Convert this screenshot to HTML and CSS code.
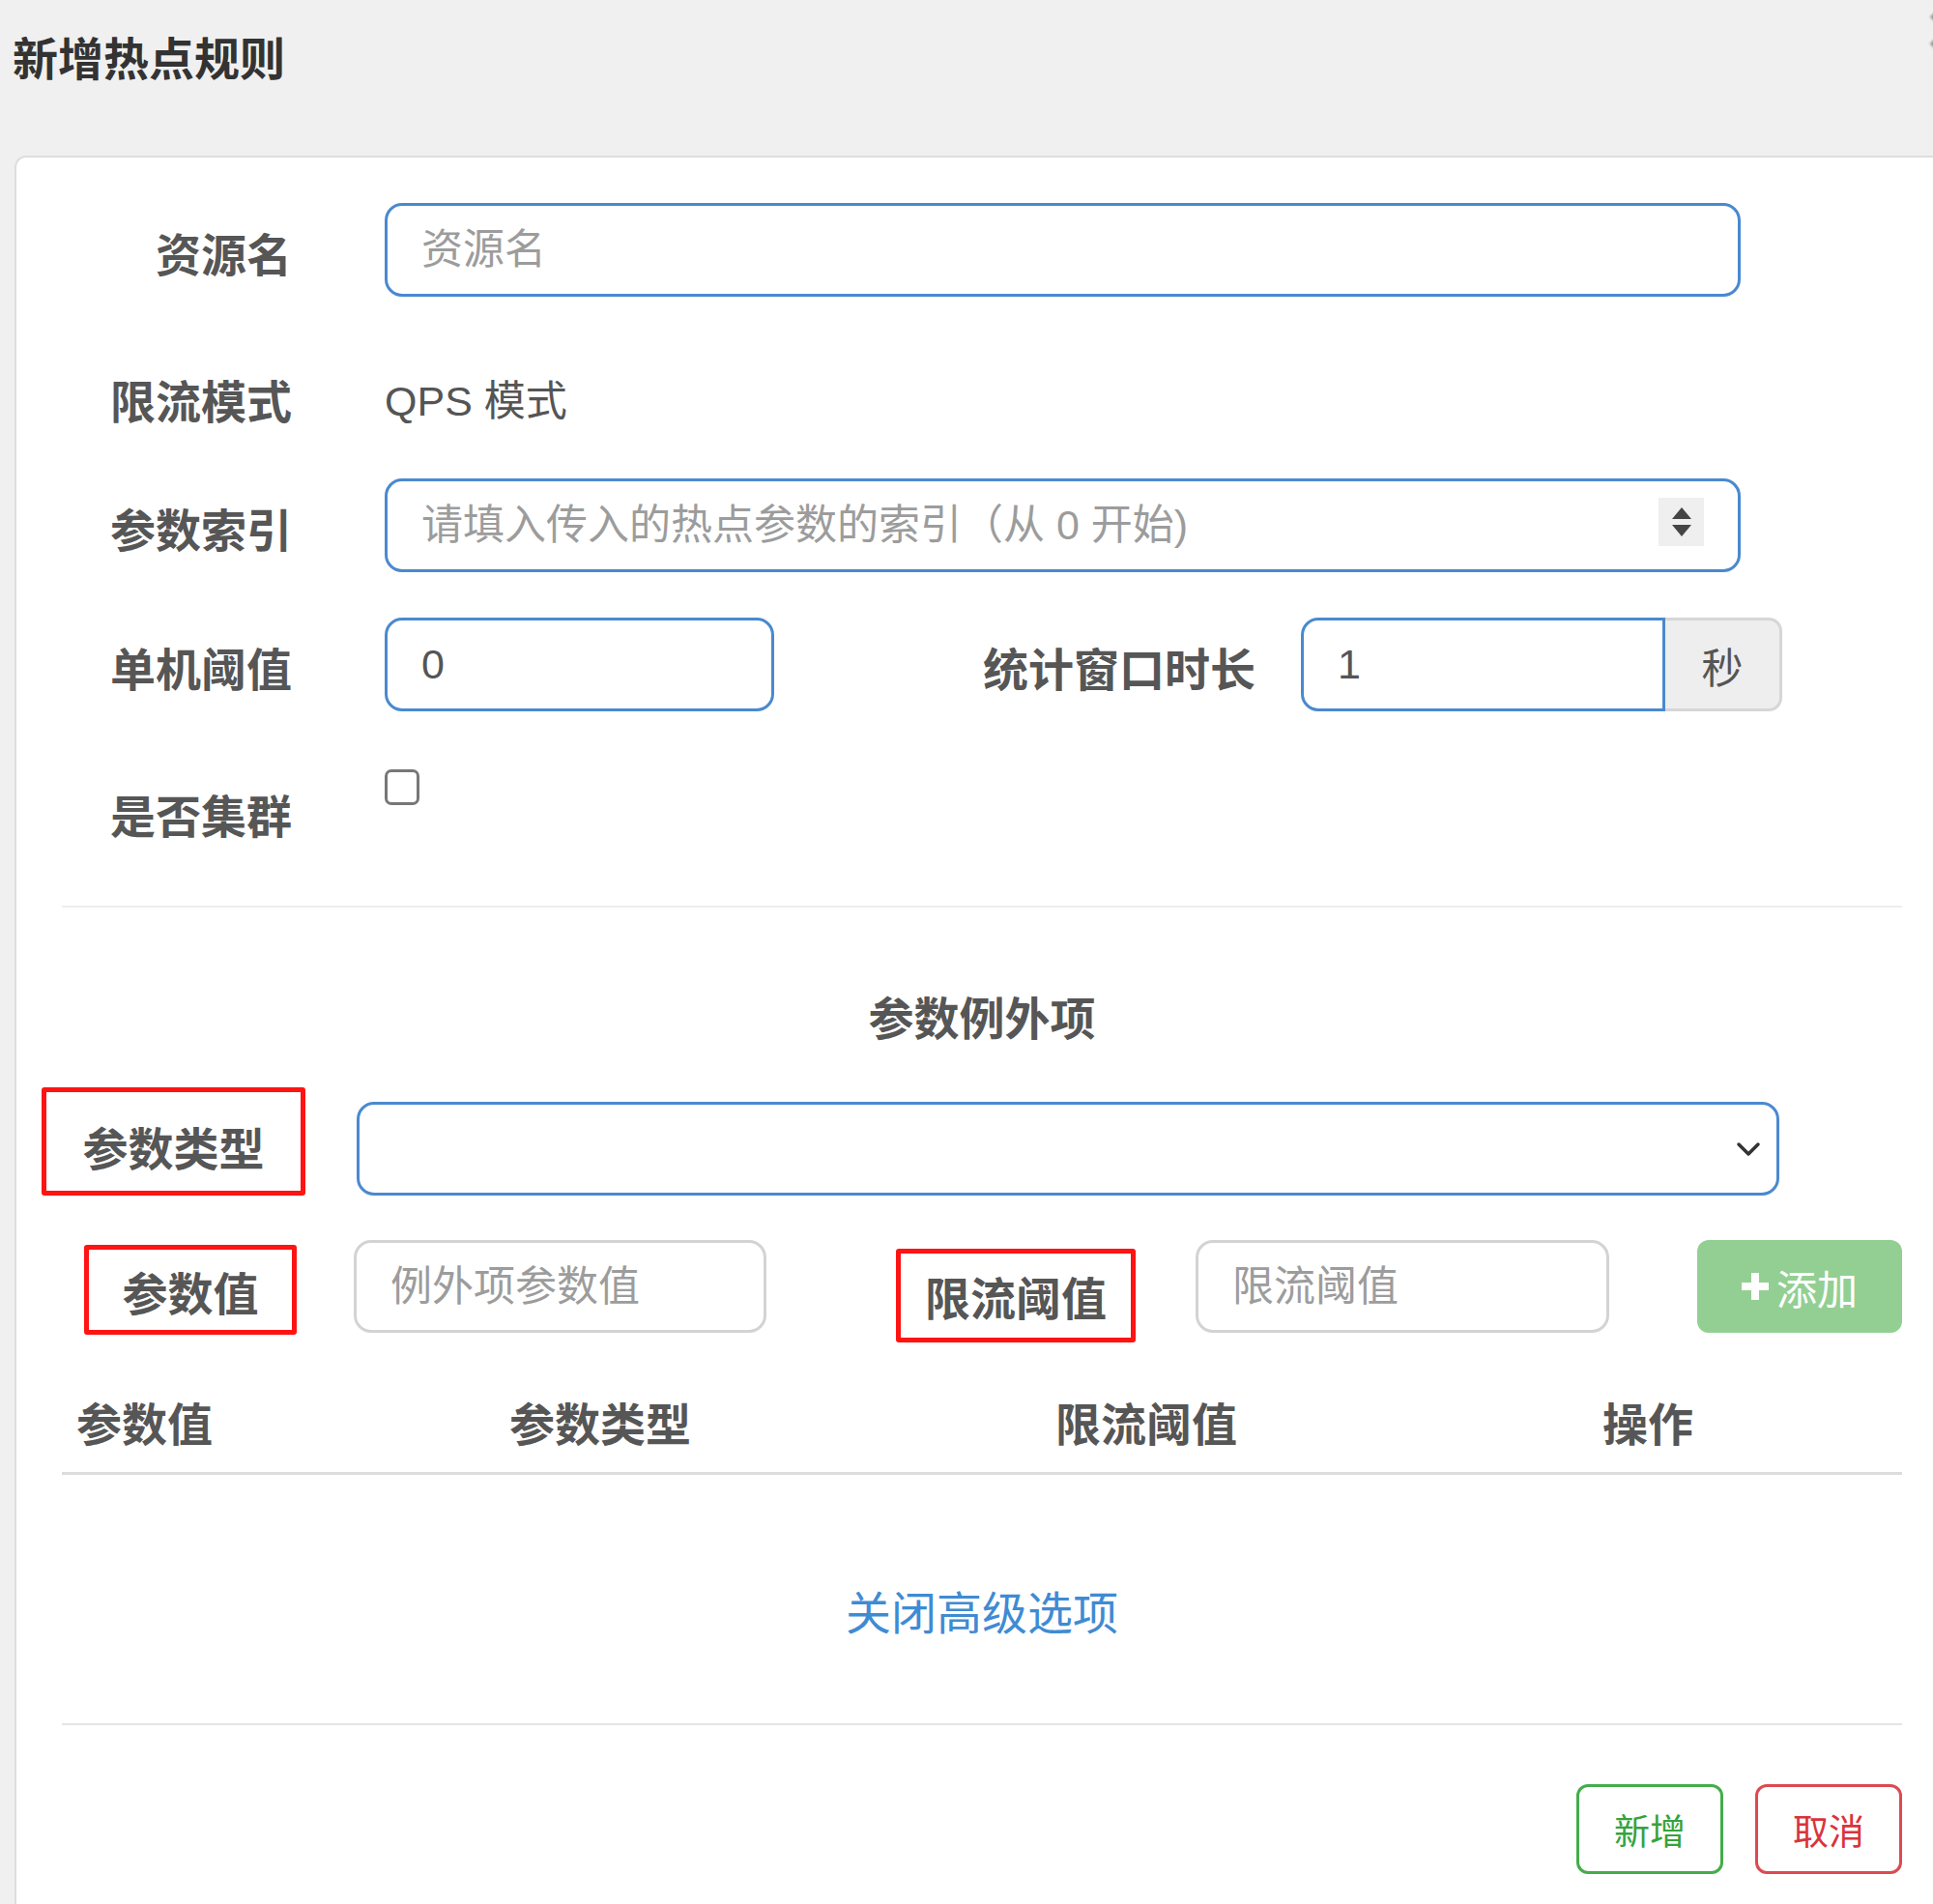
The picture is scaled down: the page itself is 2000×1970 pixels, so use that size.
FILE: index.html
```html
<!DOCTYPE html>
<html lang="zh-CN">
<head>
    <meta charset="UTF-8">
    <title>新增热点规则</title>
    <link rel="stylesheet" href="styles.css">
</head>
<body>
    <div class="modal-header">
        <h4 class="modal-title">新增热点规则</h4>
        <span class="close">&times;</span>
    </div>
    <div class="modal-body">
        <div class="form-row gap-lg">
            <label class="form-label">资源名</label>
            <input type="text" class="form-control w-full" placeholder="资源名">
        </div>
        <div class="form-row gap-sm">
            <label class="form-label">限流模式</label>
            <span class="static-text">QPS 模式</span>
        </div>
        <div class="form-row gap-md">
            <label class="form-label">参数索引</label>
            <div class="spin-wrap">
                <input type="text" class="form-control w-full" placeholder="请填入传入的热点参数的索引（从 0 开始)">
                <span class="spinner">
                    <svg width="22" height="34" viewBox="0 0 22 34"><path d="M11 2 L21 14 L1 14 Z" fill="#454545"/><path d="M1 20 L21 20 L11 32 Z" fill="#454545"/></svg>
                </span>
            </div>
        </div>
        <div class="form-row gap-lg">
            <label class="form-label">单机阈值</label>
            <input type="text" class="form-control w-sm" value="0">
            <label class="form-label-inline">统计窗口时长</label>
            <div class="input-group">
                <input type="text" class="form-control group-input" value="1">
                <span class="addon">秒</span>
            </div>
        </div>
        <div class="form-row">
            <label class="form-label">是否集群</label>
            <input type="checkbox" class="check">
        </div>

        <hr class="divider">

        <div class="section-title">参数例外项</div>

        <div class="param-type-row">
            <div class="mark mark-type">参数类型</div>
            <div class="select-box">
                <svg width="26" height="16" viewBox="0 0 26 16"><path d="M3 3 L13 13 L23 3" fill="none" stroke="#333" stroke-width="3.5" stroke-linecap="round" stroke-linejoin="round"/></svg>
            </div>
        </div>

        <div class="param-item-row">
            <div class="mark mark-value">参数值</div>
            <input type="text" class="form-control plain item-input first" placeholder="例外项参数值">
            <div class="mark mark-count">限流阈值</div>
            <input type="text" class="form-control plain item-input second" placeholder="限流阈值">
            <button class="btn-add">
                <svg width="28" height="28" viewBox="0 0 28 28"><path d="M10 0 H18 V10 H28 V18 H18 V28 H10 V18 H0 V10 H10 Z" fill="#fff"/></svg>
                添加
            </button>
        </div>

        <table class="items-table">
            <thead>
                <tr>
                    <th class="col-1">参数值</th>
                    <th class="col-2">参数类型</th>
                    <th class="col-3">限流阈值</th>
                    <th>操作</th>
                </tr>
            </thead>
        </table>

        <div class="advance-link"><a href="#">关闭高级选项</a></div>

        <hr class="divider footer-line">

        <div class="modal-footer">
            <button class="btn btn-ok">新增</button>
            <button class="btn btn-cancel">取消</button>
        </div>
    </div>
</body>
</html>
```

FILE: styles.css
```css
* {
    margin: 0;
    padding: 0;
    box-sizing: border-box;
    font-family: "Liberation Sans", "Noto Sans CJK SC", sans-serif;
}
body {
    width: 2000px;
    height: 1970px;
    overflow: hidden;
    background-color: #f0f0f0;
}
.modal-header {
    height: 161px;
    display: flex;
    justify-content: space-between;
    align-items: flex-start;
    padding-left: 13px;
    padding-top: 29px;
    overflow: hidden;
}
.modal-title {
    font-size: 47px;
    line-height: 66px;
    font-weight: 700;
    color: #333;
}
.close {
    font-size: 80px;
    line-height: 40px;
    font-weight: 700;
    color: #9a9a9a;
    margin-top: -18px;
    margin-right: -40px;
    filter: blur(1px);
}
.modal-body {
    margin-left: 15px;
    height: 1809px;
    background-color: #fff;
    border: 2px solid #dedede;
    border-right: none;
    border-bottom: none;
    border-top-left-radius: 12px;
    padding: 47px 32px 0 47px;
}
.form-row {
    display: flex;
    align-items: center;
    height: 97px;
}
.gap-sm { margin-bottom: 36px; }
.gap-md { margin-bottom: 47px; }
.gap-lg { margin-bottom: 55px; }
.form-label {
    width: 238px;
    margin-right: 96px;
    padding-top: 3px;
    text-align: right;
    font-size: 47px;
    font-weight: 700;
    color: #565656;
}
.form-label-inline {
    margin-left: 216px;
    margin-right: 47px;
    padding-top: 3px;
    font-size: 47px;
    font-weight: 700;
    color: #565656;
}
.static-text {
    font-size: 43px;
    color: #555;
}
.form-control {
    height: 97px;
    border: 3px solid #4a89cf;
    border-radius: 18px;
    padding: 0 35px;
    font-size: 43px;
    color: #555;
    background: #fff;
    outline: none;
}
.form-control::placeholder {
    color: #9c9c9c;
}
.w-full { width: 1403px; }
.w-sm { width: 403px; }
.spin-wrap {
    position: relative;
}
.spinner {
    position: absolute;
    right: 38px;
    top: 20px;
    width: 47px;
    height: 50px;
    background: #efefef;
    display: flex;
    align-items: center;
    justify-content: center;
}
.input-group {
    display: flex;
}
.group-input {
    width: 377px;
    border-top-right-radius: 0;
    border-bottom-right-radius: 0;
}
.addon {
    width: 121px;
    height: 97px;
    background: #eee;
    border: 3px solid #d6d6d6;
    border-left: none;
    border-radius: 0 14px 14px 0;
    display: flex;
    align-items: center;
    justify-content: center;
    font-size: 43px;
    color: #555;
}
.check {
    appearance: none;
    align-self: flex-start;
    margin-top: 5px;
    width: 36px;
    height: 37px;
    border: 3px solid #777;
    border-radius: 7px;
    background: #fff;
}
.divider {
    border: none;
    border-top: 2px solid #eee;
    margin-top: 49px;
}
.section-title {
    margin-top: 83px;
    text-align: center;
    font-size: 47px;
    line-height: 66px;
    font-weight: 700;
    color: #565656;
}
.mark {
    border: 5px solid #ff1313;
    border-radius: 3px;
    display: flex;
    align-items: center;
    justify-content: center;
    font-size: 47px;
    font-weight: 700;
    color: #565656;
}
.param-type-row {
    display: flex;
    align-items: flex-start;
    margin-top: 37px;
}
.mark-type {
    margin-left: -21px;
    width: 273px;
    height: 112px;
    padding-top: 8px;
}
.select-box {
    margin-left: 53px;
    margin-top: 15px;
    width: 1472px;
    height: 97px;
    border: 3px solid #4a89cf;
    border-radius: 18px;
    display: flex;
    align-items: center;
    justify-content: flex-end;
    padding-right: 16px;
}
.param-item-row {
    display: flex;
    align-items: flex-start;
    margin-top: 46px;
}
.mark-value {
    margin-left: 23px;
    margin-top: 5px;
    width: 220px;
    height: 93px;
    padding-top: 2px;
}
.mark-count {
    margin-left: 134px;
    margin-top: 9px;
    width: 248px;
    height: 97px;
}
.plain {
    border-color: #d3d3d3;
    height: 96px;
}
.item-input {
    width: 427px;
}
.item-input.first { margin-left: 59px; }
.item-input.second { margin-left: 62px; width: 428px; }
.btn-add {
    margin-left: 91px;
    width: 212px;
    height: 96px;
    border: none;
    border-radius: 12px;
    background: #93cf93;
    color: #fff;
    font-size: 42px;
    display: flex;
    align-items: center;
    justify-content: center;
    gap: 8px;
}
.items-table {
    width: 100%;
    margin-top: 38px;
    border-collapse: collapse;
}
.items-table th {
    text-align: left;
    padding: 15px 15px;
    line-height: 66px;
    font-size: 47px;
    font-weight: 700;
    color: #565656;
    border-bottom: 3px solid #ddd;
}
.col-1 { width: 448px; }
.col-2 { width: 565px; }
.col-3 { width: 566px; }
.advance-link {
    margin-top: 111px;
    text-align: center;
    line-height: 66px;
}
.advance-link a {
    font-size: 47px;
    color: #3f8bd3;
    text-decoration: none;
}
.footer-line {
    margin-top: 69px;
    border-top-color: #e5e5e5;
}
.modal-footer {
    display: flex;
    justify-content: flex-end;
    gap: 33px;
    margin-top: 61px;
}
.btn {
    width: 152px;
    height: 93px;
    background: #fff;
    border-radius: 12px;
    font-size: 37px;
}
.btn-ok {
    border: 3px solid #43ad4a;
    color: #35a33d;
}
.btn-cancel {
    border: 3px solid #dc4a52;
    color: #d9343d;
}
```
